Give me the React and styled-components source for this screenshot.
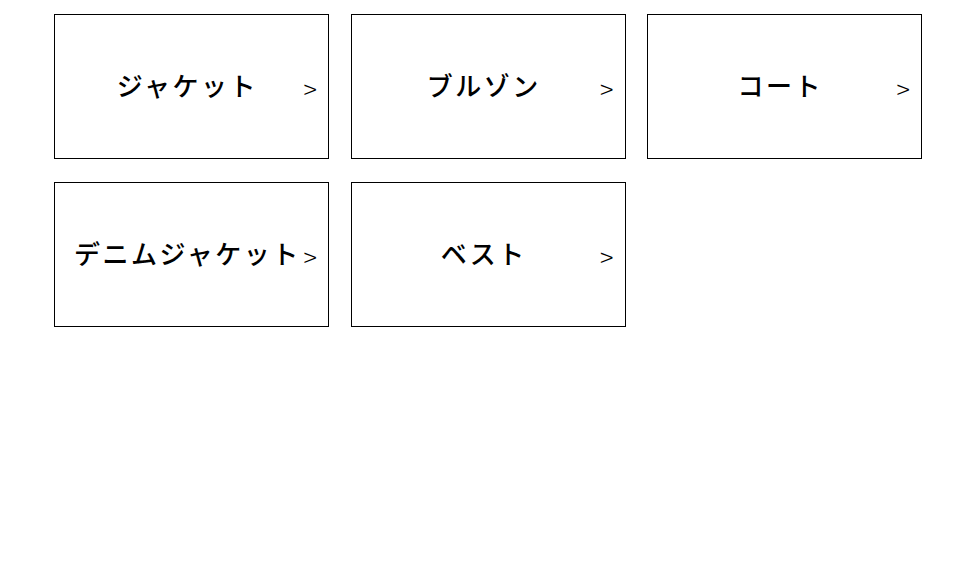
import React from 'react';
import styled, { createGlobalStyle } from 'styled-components';

const GlobalStyle = createGlobalStyle`
  html, body {
    margin: 0;
    padding: 0;
    background: #fff;
  }
  body {
    font-family: "Noto Sans CJK JP", "Noto Sans", sans-serif;
    color: #000;
  }
`;

const categories = ['ジャケット', 'ブルゾン', 'コート', 'デニムジャケット', 'ベスト'];

const Grid = styled.ul`
  list-style: none;
  margin: 0;
  padding: 14px 0 0 54px;
  display: grid;
  grid-template-columns: repeat(3, 275px);
  column-gap: 21.5px;
  row-gap: 23px;
`;

const Card = styled.li`
  box-sizing: border-box;
  height: 145px;
  border: 1px solid #000;
  display: flex;
  align-items: center;
  padding: 0 11px 0 16px;
  cursor: pointer;
`;

const Title = styled.span`
  flex: 1;
  text-align: center;
  font-size: 26px;
  font-weight: 500;
  letter-spacing: 2.5px;
  white-space: nowrap;
  margin-bottom: 4px;
`;

const Arrow = styled.span`
  font-size: 25px;
  font-weight: 300;
  line-height: 1;
  margin-top: 3px;
`;

const App = () => {
  return (
    <>
      <GlobalStyle />
      <Grid>
        {categories.map((name) => (
          <Card key={name}>
            <Title>{name}</Title>
            <Arrow>&gt;</Arrow>
          </Card>
        ))}
      </Grid>
    </>
  );
};

export default App;
